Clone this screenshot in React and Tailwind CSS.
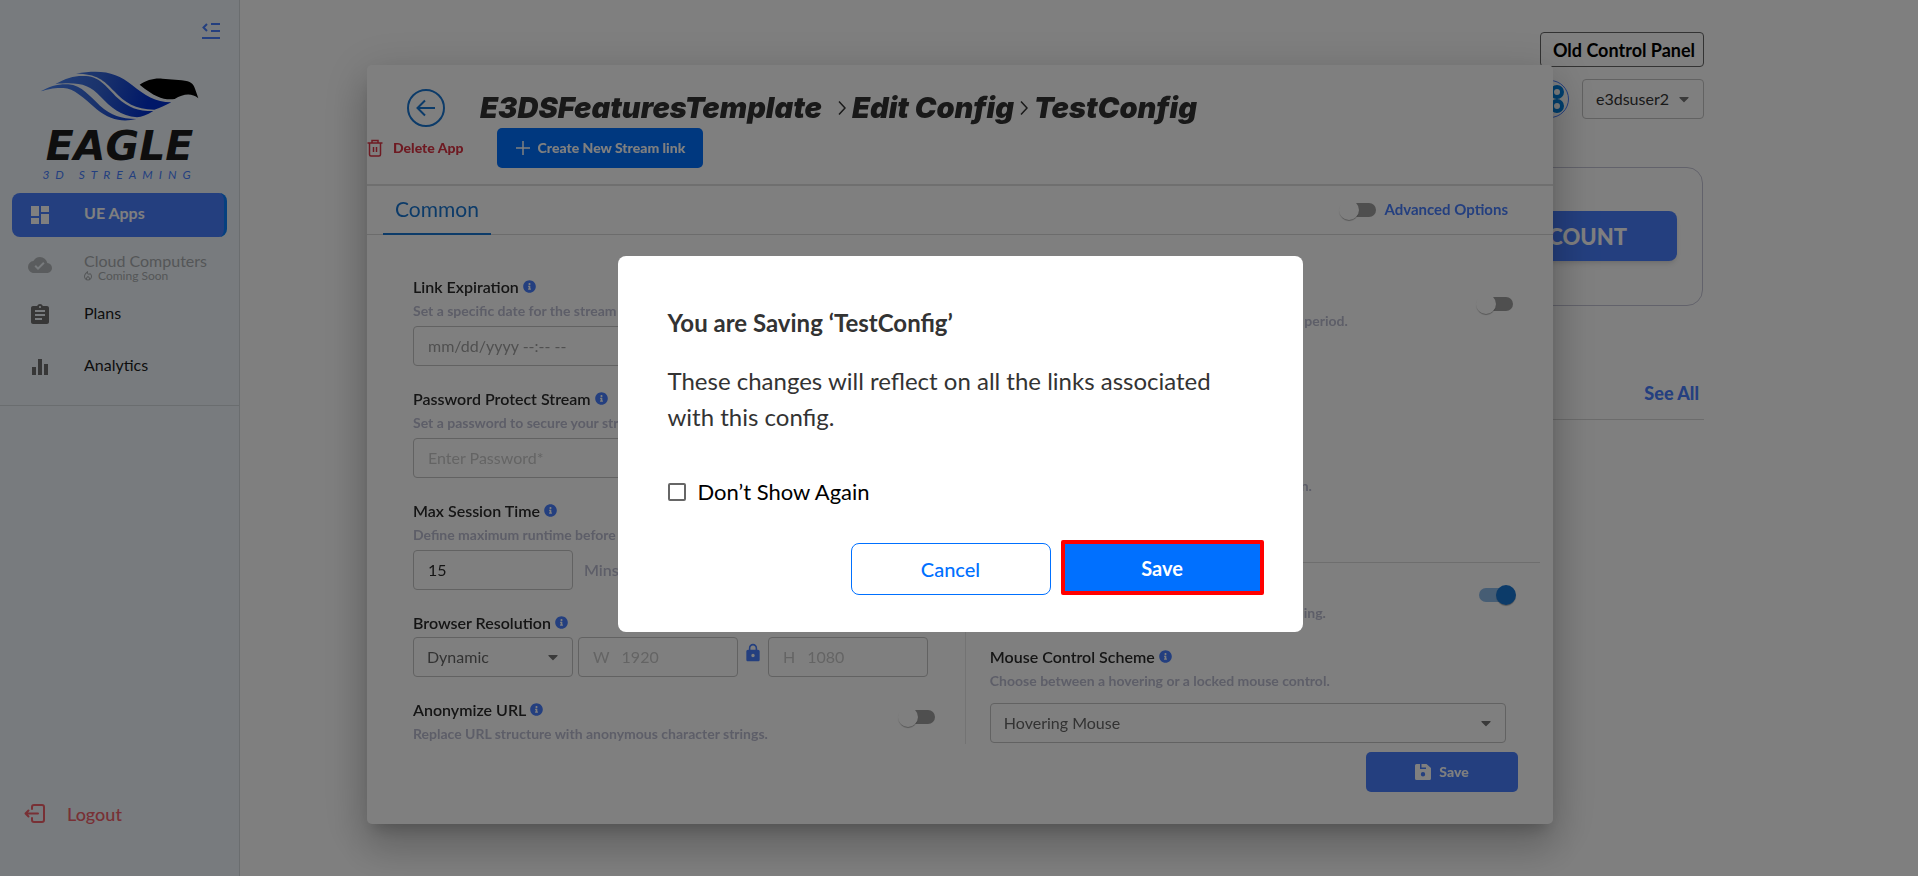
import { useState } from "react";
import { MdDashboard, MdCloudDone, MdAssignment, MdEqualizer, MdLock, MdOutlineLocalFireDepartment } from "react-icons/md";
import { FaInfoCircle, FaCaretDown } from "react-icons/fa";

const EagleMark = () => (
  <svg viewBox="120 210 477 150" className="w-[159px] h-[50px]" aria-hidden="true">
    <defs>
      <linearGradient id="wing" x1="120" y1="230" x2="500" y2="330" gradientUnits="userSpaceOnUse">
        <stop offset="0" stopColor="#4a86f5" />
        <stop offset="0.45" stopColor="#3566d8" />
        <stop offset="0.85" stopColor="#0030d0" />
      </linearGradient>
    </defs>
    <g fill="url(#wing)">
      <path d="M228 218C310 204 352 217 396 252C435 283 465 303 514 304C495 314 480 321 463 326C405 325 376 306 342 270C312 238 290 218 228 218Z" />
      <path d="M166 249C200 230 225 223 258 225C302 228 322 262 352 290C386 320 412 330 460 330C440 342 425 348 411 349C362 345 332 318 302 287C266 250 238 243 166 249Z" />
      <path d="M122 271C150 256 170 249 205 250C246 253 270 287 300 314C335 344 362 353 409 354C370 364 330 358 290 325C250 290 222 262 190 261C160 260 145 265 122 271Z" />
    </g>
    <path fill="#000" d="M419 251C440 238 460 231 487 233L545 238C574 242 579 247 585 263L595 292C575 275 550 278 524 294C492 297 468 291 419 251Z" />
  </svg>
);

const CollapseIcon = () => (
  <svg viewBox="0 0 18 16" className="w-[18px] h-4" fill="none" stroke="currentColor" strokeWidth="2">
    <path d="M5 1L1.500 4.500L5 8M9 1H18M9 8H18M0 15H18" />
  </svg>
);

const LogoutIcon = () => (
  <svg viewBox="0 0 22 20" className="w-[22px] h-5" fill="none" stroke="currentColor" strokeWidth="2" strokeLinecap="round" strokeLinejoin="round">
    <path d="M8 5V3a2 2 0 0 1 2-2h8a2 2 0 0 1 2 2v13a2 2 0 0 1-2 2h-8a2 2 0 0 1-2-2v-2M14 9.500H1.500M4.500 6.500L1.500 9.500L4.500 12.500" />
  </svg>
);

const BackIcon = () => (
  <svg viewBox="0 0 38 38" className="size-[38px]" fill="none" stroke="currentColor" strokeWidth="2">
    <circle cx="19" cy="19" r="18" />
    <path d="M28 19H11M18 11.500L10.500 19L18 26.500" />
  </svg>
);

const TrashIcon = () => (
  <svg viewBox="0 0 16 18" className="w-4 h-[18px]" fill="none" stroke="currentColor" strokeWidth="1.500">
    <path d="M0.500 4H15.500M5 4V1.500H11V4M2.500 4V15.500a1.500 1.500 0 0 0 1.500 1.500H12a1.500 1.500 0 0 0 1.500-1.500V4M6.500 8V13M9.500 8V13" />
  </svg>
);

const PlusIcon = () => (
  <svg viewBox="0 0 14 14" className="size-3.5" stroke="currentColor" strokeWidth="1.500">
    <path d="M7 0V14M0 7H14" />
  </svg>
);

const ChevronIcon = () => (
  <svg viewBox="0 0 8 14" className="w-2 h-3.5" fill="none" stroke="currentColor" strokeWidth="1.500" aria-hidden="true">
    <path d="M1 0.500L7 7L1 13.500" />
  </svg>
);

const FloppyIcon = () => (
  <svg viewBox="0 0 16 16" className="size-4" aria-hidden="true">
    <path
      fill="currentColor"
      fillRule="evenodd"
      d="M1.500 0H5V5H11V3.500H6.500V0H11.500L16 4V14.500A1.500 1.500 0 0 1 14.500 16H1.500A1.500 1.500 0 0 1 0 14.500V1.500A1.500 1.500 0 0 1 1.500 0ZM8 8a2.200 2.200 0 1 0 0 4.400a2.200 2.200 0 0 0 0-4.400Z"
    />
  </svg>
);

const Avatar = () => (
  <svg viewBox="0 0 38 38" className="size-[38px]" fill="none" aria-hidden="true">
    <circle cx="19" cy="19" r="18.500" stroke="#487fff" />
    <g stroke="#0080e0" strokeWidth="4">
      <circle cx="13" cy="12" r="5" />
      <circle cx="26" cy="12" r="5" />
      <circle cx="13" cy="26" r="5" />
      <circle cx="26" cy="26" r="5" />
    </g>
  </svg>
);

const NavItem = ({ icon: Icon, label, note, active, disabled }) => (
  <a
    href="#"
    aria-disabled={disabled}
    className={`flex items-center rounded-lg pl-4 ${
      active ? "h-11 bg-[#487fff] border-r-[3px] border-[#0a80ff] text-white font-bold" : disabled ? "h-10 text-[#a9adb0]" : "h-11 text-[#1c1c1c]"
    }`}
  >
    <Icon className={`text-2xl ${active ? "" : disabled ? "text-[#b5b9bc]" : "text-[#6f6f6f]"}`} />
    <span className={`ml-8 text-base leading-4 ${note ? "pt-1.5" : "pb-1"}`}>
      {label}
      {note && (
        <span className="-ml-0.5 flex items-center gap-1 text-xs leading-[14px]">
          <MdOutlineLocalFireDepartment />
          {note}
        </span>
      )}
    </span>
  </a>
);

const Sidebar = () => (
  <aside className="flex min-h-screen w-60 shrink-0 flex-col border-r border-[#d5dbdf] bg-[#f1f7fc]">
    <div className="flex justify-end pt-[23px] pr-[19px] text-[#487fff]">
      <button aria-label="Collapse menu"><CollapseIcon /></button>
    </div>
    <div className="mt-8 flex flex-col items-center">
      <EagleMark />
      <div className="mt-2 font-['DejaVu_Sans'] text-[41px] leading-[34px] font-bold italic text-[#1c1c1c]">EAGLE</div>
      <div className="mt-1 text-xs leading-4 italic tracking-[0.5em] text-[#487fff]">3D STREAMING</div>
    </div>
    <nav className="mt-2.5 flex flex-col gap-2 border-b border-[#d5dbdf] px-3 pb-4">
      <NavItem icon={MdDashboard} label="UE Apps" active />
      <NavItem icon={MdCloudDone} label="Cloud Computers" note="Coming Soon" disabled />
      <NavItem icon={MdAssignment} label="Plans" />
      <NavItem icon={MdEqualizer} label="Analytics" />
    </nav>
    <a href="#" className="mt-auto mb-[50px] flex items-center gap-[21px] pl-6 text-lg leading-6 font-medium text-[#f0606a]">
      <LogoutIcon />
      Logout
    </a>
  </aside>
);

const Caret = () => <FaCaretDown className="pointer-events-none absolute right-3 top-1/2 -translate-y-1/2 text-base text-[#757575]" />;

const SelectBox = ({ id, label, value, className }) => (
  <div className={`relative ${className}`}>
    <select id={id} aria-label={label} className="h-10 w-full appearance-none rounded-sm border border-[#c4c4c4] bg-transparent pl-[13px] text-base text-[#666]">
      <option>{value}</option>
    </select>
    <Caret />
  </div>
);

const Switch = ({ id, label, defaultChecked, className = "" }) => (
  <input
    id={id}
    type="checkbox"
    role="switch"
    aria-label={label}
    defaultChecked={defaultChecked}
    className={`relative h-3.5 w-[34px] shrink-0 appearance-none rounded-full bg-[#9e9e9e] before:absolute before:-top-[3px] before:-left-[3px] before:size-5 before:rounded-full before:bg-white before:shadow-[0_2px_1px_-1px_rgba(0,0,0,0.2),0_1px_1px_0_rgba(0,0,0,0.14)] checked:bg-[#8cbae8] checked:before:left-[17px] checked:before:bg-[#1976d2] ${className}`}
  />
);

const FieldLabel = ({ htmlFor, children }) => (
  <label htmlFor={htmlFor} className="flex h-5 items-center gap-1 text-base leading-5 font-semibold text-[#2b2b2b]">
    {children}
    <FaInfoCircle className="text-[13px] text-[#487fff]" />
  </label>
);

const Hint = ({ children, className = "" }) => (
  <p className={`text-sm leading-5 font-bold whitespace-nowrap text-[#bbbcd0] ${className}`}>{children}</p>
);

const inputClass = "h-10 rounded-sm border border-[#c4c4c4] bg-transparent px-3.5 text-base";

const LeftColumn = () => (
  <div className="flex flex-col gap-[23px] border-r border-[#e6e6e6] pr-[30px] pl-[46px]">
    <div>
      <FieldLabel htmlFor="expiration">Link Expiration</FieldLabel>
      <Hint className="mt-1">Set a specific date for the stream link to expire.</Hint>
      <input id="expiration" type="text" placeholder="mm/dd/yyyy --:-- --" className={`mt-[5px] w-[516px] placeholder:text-[#a0a0a0] ${inputClass}`} />
    </div>
    <div>
      <FieldLabel htmlFor="password">Password Protect Stream</FieldLabel>
      <Hint className="mt-1">Set a password to secure your stream.</Hint>
      <input id="password" type="password" placeholder="Enter Password*" className={`mt-[5px] w-[516px] placeholder:text-[#c9c9c9] ${inputClass}`} />
    </div>
    <div>
      <FieldLabel htmlFor="session">Max Session Time</FieldLabel>
      <Hint className="mt-1">Define maximum runtime before the session ends.</Hint>
      <div className="mt-[5px] flex items-center gap-[11px]">
        <input id="session" type="text" defaultValue="15" className={`w-40 text-[#2b2b2b] ${inputClass}`} />
        <span className="text-base font-semibold text-[#bbbcd0]">Mins</span>
      </div>
    </div>
    <div>
      <FieldLabel htmlFor="resolution">Browser Resolution</FieldLabel>
      <div className="mt-1 flex items-center gap-[5px]">
        <SelectBox id="resolution" value="Dynamic" className="w-40" />
        <label className={`flex w-40 items-center gap-3 text-[#c9c9c9] ${inputClass}`}>
          W
          <input type="text" placeholder="1920" className="w-full placeholder:text-[#c9c9c9]" />
        </label>
        <MdLock className="mb-2 text-xl text-[#487fff]" />
        <label className={`flex w-40 items-center gap-3 text-[#c9c9c9] ${inputClass}`}>
          H
          <input type="text" placeholder="1080" className="w-full placeholder:text-[#c9c9c9]" />
        </label>
      </div>
    </div>
    <div className="flex items-start justify-between">
      <div>
        <FieldLabel htmlFor="anonymize">Anonymize URL</FieldLabel>
        <Hint className="mt-1">Replace URL structure with anonymous character strings.</Hint>
      </div>
      <Switch id="anonymize" className="mt-2.5" />
    </div>
  </div>
);

const RightColumn = () => (
  <div className="pr-[13px] pl-6">
    <div className="flex items-center justify-between pr-[27px]">
      <div className="w-[358px]">
        <FieldLabel htmlFor="countdown">Countdown</FieldLabel>
        <Hint className="mt-3.5 text-right">Disconnect after an idle period.</Hint>
      </div>
      <Switch id="countdown" />
    </div>
    <div className="mt-[121px] w-[322px]">
      <FieldLabel>Loading Screen</FieldLabel>
      <Hint className="mt-1 text-right">Select the loading screen design.</Hint>
    </div>
    <hr className="mt-[66px] border-[#dcdcdc]" />
    <div className="mt-2.5 flex items-start justify-between pr-[27px]">
      <div className="w-[336px]">
        <FieldLabel htmlFor="touch">Touch Input</FieldLabel>
        <Hint className="mt-2.5 text-right">Enable touch while streaming.</Hint>
      </div>
      <Switch id="touch" defaultChecked className="mt-[15px]" />
    </div>
    <div className="mt-6 pr-[34px]">
      <FieldLabel htmlFor="mouse">Mouse Control Scheme</FieldLabel>
      <Hint className="mt-1">Choose between a hovering or a locked mouse control.</Hint>
      <SelectBox id="mouse" value="Hovering Mouse" className="mt-3 w-full" />
    </div>
  </div>
);

const ConfigDialog = () => (
  <section className="w-full max-w-[1186px] rounded-[5px] bg-white shadow-[0_11px_15px_-7px_rgba(0,0,0,0.2),0_24px_38px_3px_rgba(0,0,0,0.14),0_9px_46px_8px_rgba(0,0,0,0.12)]">
    <header className="border-b-2 border-[#dedede] pt-6 pb-4">
      <div className="flex h-[39px] items-start gap-[35px] pl-10">
        <button aria-label="Back" className="text-[#1976d2]"><BackIcon /></button>
        <h1 className="flex items-center font-['Inter'] text-[29px] leading-[38px] font-black italic text-[#333]">
          E3DSFeaturesTemplate
          <span className="mr-1.5 ml-4"><ChevronIcon /></span>
          Edit Config
          <span className="mx-1.5"><ChevronIcon /></span>
          TestConfig
        </h1>
      </div>
      <div className="flex items-center gap-[34px]">
        <button className="flex items-center gap-2.5 text-sm font-black text-[#dc3545]">
          <TrashIcon />
          Delete App
        </button>
        <button className="flex h-10 w-[206px] items-center justify-center gap-2 rounded-[5px] bg-[#0070ff] text-sm font-black text-white">
          <PlusIcon />
          Create New Stream link
        </button>
      </div>
    </header>
    <div className="flex items-center justify-between border-b border-[#d8d8d8] pr-[45px] pl-4">
      <button className="-mb-px h-[49px] w-[108px] border-b-2 border-[#1976d2] text-[21px] text-[#1976d2]">Common</button>
      <label className="flex items-center gap-2 text-[15px] font-bold text-[#487fff]">
        <Switch id="advanced" />
        Advanced Options
      </label>
    </div>
    <div className="grid grid-cols-[51fr_50fr] pt-[42px]">
      <LeftColumn />
      <RightColumn />
    </div>
    <div className="flex justify-end pt-2 pr-[35px] pb-8">
      <button className="flex h-10 w-[152px] items-center justify-center gap-2 rounded-[5px] bg-[#487fff] text-sm font-black text-white">
        <FloppyIcon />
        Save
      </button>
    </div>
  </section>
);

const SaveModal = () => {
  const [hideNext, setHideNext] = useState(false);

  return (
    <div role="dialog" aria-labelledby="save-title" className="w-full max-w-[685px] rounded-lg bg-white pt-[49px] pr-[39px] pb-[37px] pl-[50px]">
      <h2 id="save-title" className="text-2xl leading-9 font-bold text-[#333]">You are Saving ‘TestConfig’</h2>
      <p className="mt-[22px] pr-6 text-2xl leading-9 text-[#333]">
        These changes will reflect on all the links associated with this config.
      </p>
      <label className="mt-[41px] flex items-center gap-3 text-[22px] leading-8 text-black">
        <input
          type="checkbox"
          checked={hideNext}
          onChange={(e) => setHideNext(e.target.checked)}
          className="size-[18px] appearance-none rounded-xs border-2 border-[#666] checked:bg-[#1976d2]"
        />
        Don’t Show Again
      </label>
      <div className="mt-8 flex items-end justify-end gap-2.5">
        <button className="h-[52px] w-[200px] rounded-lg border border-[#0070ff] text-xl font-medium text-[#0070ff]">Cancel</button>
        <button className="h-[55px] w-[203px] rounded-xs border-4 border-[#ff0000] bg-[#0070ff] text-xl font-bold text-white">Save</button>
      </div>
    </div>
  );
};

const Dashboard = () => (
  <main className="flex-1 bg-white">
    <div className="mx-auto max-w-[1250px] pt-8">
      <div className="flex justify-end">
        <button className="h-[35px] w-[164px] rounded-sm border border-[#666] pl-1 text-lg leading-6 font-bold text-black">Old Control Panel</button>
      </div>
      <div className="mt-3 flex items-center justify-end gap-[13px]">
        <Avatar />
        <div className="relative w-[122px]">
          <select aria-label="Account" className="h-10 w-full appearance-none rounded-sm border border-[#c4c4c4] pl-[13px] text-base text-[#333]">
            <option>e3dsuser2</option>
          </select>
          <Caret />
        </div>
      </div>
      <div className="mt-12 mr-px flex justify-end rounded-2xl border border-[#c5c5d6] pt-[43px] pr-[25px] pb-11">
        <button className="h-[50px] rounded-lg bg-[#487fff] px-[50px] text-[22px] font-black text-white shadow-md">UPGRADE ACCOUNT</button>
      </div>
      <div className="mt-[75px] flex justify-end border-b border-[#d8d8d8] pr-[5px] pb-3.5">
        <a href="#" className="text-lg leading-6 font-black text-[#487fff]">See All</a>
      </div>
    </div>
  </main>
);

export default function App() {
  return (
    <div className="relative flex min-h-screen overflow-hidden font-['Lato','Noto_Sans',sans-serif]">
      <Sidebar />
      <Dashboard />
      <div className="fixed inset-0 flex items-center justify-center pt-3 pl-0.5">
        <ConfigDialog />
      </div>
      <div className="fixed inset-0 flex items-center justify-center bg-black/50 pt-3 pl-0.5">
        <SaveModal />
      </div>
    </div>
  );
}
